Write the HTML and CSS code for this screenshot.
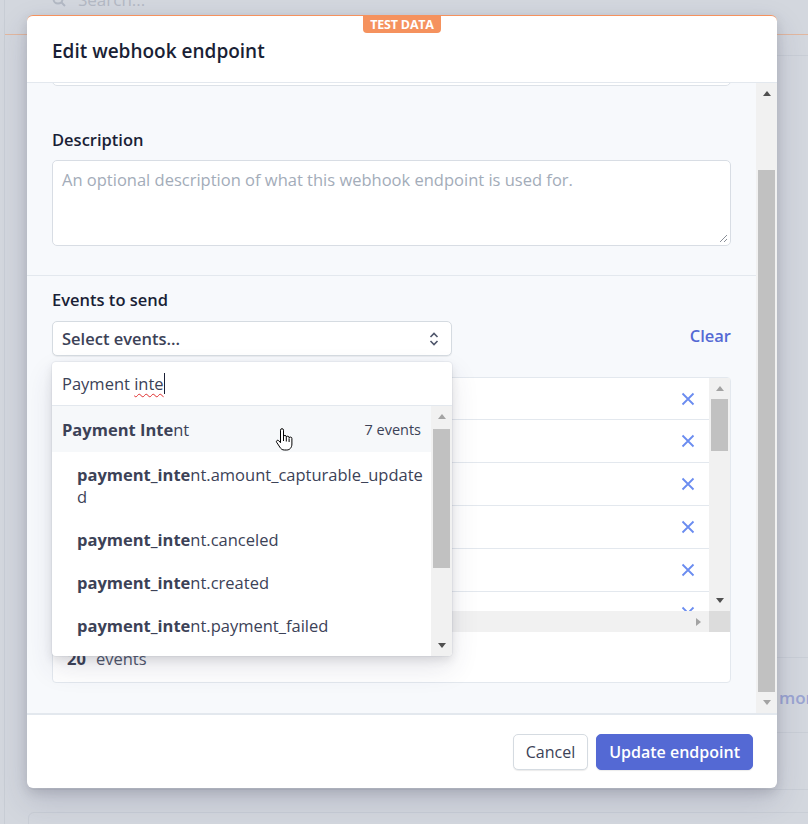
FILE: index.html
```html
<!DOCTYPE html>
<html lang="en">
<head>
    <meta charset="UTF-8">
    <title>Edit webhook endpoint</title>
    <link rel="stylesheet" href="styles.css">
</head>
<body>
    <div class="page">
        <div class="page-top">
            <div class="page-search">
                <svg width="14" height="14" viewBox="0 0 14 14"><circle cx="6" cy="6" r="4.5" fill="none" stroke="#b3b9c4" stroke-width="2"/><path d="M9.5 9.5L13 13" stroke="#b3b9c4" stroke-width="2"/></svg>
                <span>Search...</span>
            </div>
            <div class="page-tools">
                <svg width="14" height="12" viewBox="0 0 14 12"><path d="M1 4h3l6-3v10L4 8H1z" fill="#b3b9c4"/></svg>
            </div>
        </div>
        <div class="page-card">
            <div class="page-row tall"></div>
            <div class="page-row more-row"><span class="page-more">more</span></div>
            <div class="page-row last"></div>
        </div>
        <div class="page-card second"></div>
    </div>

    <div class="modal">
        <div class="modal-header">
            <span class="test-badge">TEST DATA</span>
            <h2>Edit webhook endpoint</h2>
        </div>

        <div class="modal-body">
            <div class="modal-scroll">
                <div class="section">
                    <div class="prev-input"></div>
                    <div class="field-label">Description</div>
                    <div class="textarea">
                        <span class="placeholder">An optional description of what this webhook endpoint is used for.</span>
                        <svg class="resize" width="9" height="9" viewBox="0 0 9 9"><path d="M8 1L1 8M8 5L5 8" stroke="#8a8f98" stroke-width="1"/></svg>
                    </div>
                </div>

                <div class="section events">
                    <div class="field-label">Events to send</div>
                    <div class="select-row">
                        <div class="select">
                            <span>Select events...</span>
                            <svg width="10" height="16" viewBox="0 0 10 16"><path d="M1.5 6L5 2.5 8.5 6M1.5 10L5 13.5 8.5 10" fill="none" stroke="#4f566b" stroke-width="1.6"/></svg>
                        </div>
                        <a class="clear" href="#">Clear</a>
                    </div>

                    <div class="selected">
                        <div class="selected-main">
                            <div class="selected-rows">
                                <div class="selected-row"><svg class="remove" width="14" height="14" viewBox="0 0 14 14"><path d="M1.5 1.5l11 11M12.5 1.5l-11 11"/></svg></div>
                                <div class="selected-row"><svg class="remove" width="14" height="14" viewBox="0 0 14 14"><path d="M1.5 1.5l11 11M12.5 1.5l-11 11"/></svg></div>
                                <div class="selected-row"><svg class="remove" width="14" height="14" viewBox="0 0 14 14"><path d="M1.5 1.5l11 11M12.5 1.5l-11 11"/></svg></div>
                                <div class="selected-row"><svg class="remove" width="14" height="14" viewBox="0 0 14 14"><path d="M1.5 1.5l11 11M12.5 1.5l-11 11"/></svg></div>
                                <div class="selected-row"><svg class="remove" width="14" height="14" viewBox="0 0 14 14"><path d="M1.5 1.5l11 11M12.5 1.5l-11 11"/></svg></div>
                                <div class="selected-row"><svg class="remove" width="14" height="14" viewBox="0 0 14 14"><path d="M1.5 1.5l11 11M12.5 1.5l-11 11"/></svg></div>
                            </div>
                            <div class="sb">
                                <div class="sb-btn"><i class="arrow-up dim"></i></div>
                                <div class="sb-track"><div class="sb-thumb thumb-list"></div></div>
                                <div class="sb-btn"><i class="arrow-down"></i></div>
                            </div>
                        </div>
                        <div class="hscroll">
                            <div class="hscroll-track"><i class="arrow-right dim"></i></div>
                            <div class="sb-corner"></div>
                        </div>
                        <div class="selected-count"><b>20</b> events</div>
                    </div>

                    <div class="dropdown">
                        <div class="dropdown-search">Payment <span class="typo">inte</span><span class="caret"></span></div>
                        <div class="dropdown-body">
                            <div class="dropdown-list">
                                <div class="group-row">
                                    <span><b>Payment Inte</b>nt</span>
                                    <span class="group-count">7 events</span>
                                </div>
                                <div class="event-row"><b>payment_inte</b>nt.amount_capturable_updated</div>
                                <div class="event-row"><b>payment_inte</b>nt.canceled</div>
                                <div class="event-row"><b>payment_inte</b>nt.created</div>
                                <div class="event-row"><b>payment_inte</b>nt.payment_failed</div>
                            </div>
                            <div class="sb">
                                <div class="sb-btn"><i class="arrow-up dim"></i></div>
                                <div class="sb-track"><div class="sb-thumb thumb-drop"></div></div>
                                <div class="sb-btn"><i class="arrow-down"></i></div>
                            </div>
                        </div>
                        <svg class="cursor" width="18" height="24" viewBox="0 0 18 24"><path d="M5.5 2.2a1.5 1.5 0 0 1 3 0v6.6a1.4 1.4 0 0 1 2.8 0v.8a1.4 1.4 0 0 1 2.8 0v.8a1.4 1.4 0 0 1 2.8 .2V16c0 3.4-2 6-5.2 6H9.4c-2.3 0-3.4-1.1-4.6-2.9L1.6 14.2a1.3 1.3 0 0 1 2-1.6l1.9 2.1z" fill="#fff" stroke="#000" stroke-width="1"/><path d="M8.5 9v4M11.3 10v3.5M14.1 11v3" stroke="#000" stroke-width="1"/></svg>
                    </div>
                </div>
            </div>
            <div class="sb body-sb">
                <div class="sb-btn"><i class="arrow-up"></i></div>
                <div class="sb-track"><div class="sb-thumb thumb-body"></div></div>
                <div class="sb-btn"><i class="arrow-down dim"></i></div>
            </div>
        </div>

        <div class="modal-footer">
            <button class="btn">Cancel</button>
            <button class="btn primary">Update endpoint</button>
        </div>
    </div>
</body>
</html>
```

FILE: styles.css
```css
* {
    box-sizing: border-box;
}
body {
    margin: 0;
    width: 808px;
    height: 824px;
    overflow: hidden;
    position: relative;
    background-color: #d3d7de;
    font-family: 'Open Sans', 'Noto Sans', sans-serif;
    font-size: 16.5px;
    color: #3c4257;
}

/* page behind the overlay */
.page {
    height: 100%;
    border-left: 1px solid #c8cdd5;
    margin-left: 4px;
    overflow: hidden;
}
.page-top {
    height: 35px;
    border-bottom: 1px solid #e2b79f;
    display: flex;
    justify-content: space-between;
    align-items: flex-start;
    padding: 0 0 0 47px;
}
.page-search, .page-tools {
    display: flex;
    align-items: center;
    gap: 12px;
    margin-top: -11px;
    font-size: 17px;
    color: #b3b9c4;
    line-height: 22px;
}
.page-tools {
    margin-right: 10px;
}
.page-card {
    margin: 20px -40px 0 23px;
    border: 1px solid #c9ced6;
    border-radius: 6px;
}
.page-row {
    height: 75px;
    border-bottom: 1px solid #c9ced6;
}
.page-row.tall {
    height: 602px;
}
.page-row.last {
    height: 56px;
    border-bottom: none;
}
.more-row {
    display: flex;
    align-items: center;
    padding-left: 750px;
    padding-top: 4px;
}
.page-more {
    color: #9aa4d2;
    font-size: 17px;
    font-weight: 600;
}
.page-card.second {
    margin-top: 22px;
    height: 60px;
}

/* modal */
.modal {
    position: absolute;
    left: 27px;
    top: 15px;
    width: 750px;
    height: 773px;
    background: white;
    border-top: 1px solid #f5925e;
    border-radius: 6px;
    box-shadow: 0 12px 30px rgba(50, 50, 93, 0.18), 0 4px 12px rgba(0, 0, 0, 0.12);
    display: flex;
    flex-direction: column;
    overflow: hidden;
}
.modal-header {
    height: 67px;
    border-bottom: 1px solid #e3e8ee;
    display: flex;
    flex-direction: column;
    padding: 0 25px;
}
.test-badge {
    align-self: center;
    height: 17px;
    padding: 0 7px;
    background-color: #f5925e;
    color: white;
    font-size: 12.5px;
    font-weight: 700;
    line-height: 17px;
    border-radius: 0 0 4px 4px;
    letter-spacing: -0.2px;
}
.modal-header h2 {
    margin: 6px 0 0;
    font-size: 19px;
    font-weight: 600;
    line-height: 24px;
    color: #1a1f36;
}

.modal-body {
    height: 630px;
    display: flex;
    background-color: #f7f9fc;
}
.modal-scroll {
    flex: 1;
    overflow: hidden;
}
.section {
    padding: 0 25px 29px;
}
.prev-input {
    height: 36px;
    margin-top: -33px;
    background: white;
    border: 1px solid #dde2e8;
    border-radius: 5px;
}
.field-label {
    margin-top: 44px;
    font-weight: 600;
    line-height: 20px;
    color: #1a1f36;
}
.textarea {
    position: relative;
    margin-top: 10px;
    height: 86px;
    background: white;
    border: 1px solid #d8dde4;
    border-radius: 5px;
    padding: 7px 9px;
    line-height: 24px;
}
.placeholder {
    color: #a3acb9;
}
.resize {
    position: absolute;
    right: 2px;
    bottom: 2px;
}

.events {
    position: relative;
    border-top: 1px solid #e3e8ee;
    padding: 14px 25px 0;
}
.events .field-label {
    margin-top: 0;
}
.select-row {
    margin-top: 11px;
    display: flex;
    align-items: center;
    justify-content: space-between;
}
.select {
    width: 400px;
    height: 35px;
    background: white;
    border: 1px solid #d5dbe1;
    border-radius: 5px;
    box-shadow: 0 1px 1px rgba(0, 0, 0, 0.06);
    display: flex;
    align-items: center;
    justify-content: space-between;
    padding: 0 12px 0 9px;
    font-weight: 600;
    color: #3c4257;
}
.clear {
    margin-bottom: 7px;
    color: #5469d4;
    font-weight: 600;
    text-decoration: none;
}

.selected {
    margin-top: 21px;
    height: 306px;
    background: white;
    border: 1px solid #e3e8ee;
    border-radius: 4px;
    display: flex;
    flex-direction: column;
}
.selected-main {
    height: 233px;
    display: flex;
}
.selected-rows {
    flex: 1;
    overflow: hidden;
}
.selected-row {
    height: 43px;
    border-bottom: 1px solid #e3e8ee;
    display: flex;
    align-items: center;
    justify-content: flex-end;
    padding-right: 14px;
}
.selected-row:first-child {
    height: 42px;
}
.remove {
    stroke: #6a8cf0;
    stroke-width: 1.8;
}
.hscroll {
    height: 21px;
    display: flex;
}
.hscroll-track {
    flex: 1;
    background: #f1f1f1;
    display: flex;
    align-items: center;
    justify-content: flex-end;
    padding-right: 8px;
}
.sb-corner {
    width: 21px;
    background: #dcdcdc;
}
.selected-count {
    flex: 1;
    display: flex;
    align-items: center;
    gap: 10px;
    padding: 2px 0 0 14px;
    color: #4f566b;
}
.selected-count b {
    color: #3c4257;
}

/* scrollbars */
.sb {
    width: 21px;
    background: #f1f1f1;
    display: flex;
    flex-direction: column;
}
.sb-btn {
    height: 21px;
    display: flex;
    align-items: center;
    justify-content: center;
}
.sb-track {
    flex: 1;
    padding: 0 2px;
}
.sb-thumb {
    background: #c1c1c1;
}
.thumb-body {
    margin-top: 66px;
    height: 522px;
}
.thumb-list {
    height: 52px;
}
.thumb-drop {
    margin-top: 2px;
    height: 139px;
}
.arrow-up, .arrow-down, .arrow-right {
    width: 0;
    height: 0;
    border: 4.5px solid transparent;
}
.arrow-up {
    border-bottom: 5px solid #505050;
    border-top-width: 0;
}
.arrow-down {
    border-top: 5px solid #505050;
    border-bottom-width: 0;
}
.arrow-right {
    border-left: 5px solid #a3a3a3;
    border-right-width: 0;
}
.arrow-up.dim {
    border-bottom-color: #a3a3a3;
}
.arrow-down.dim {
    border-top-color: #a3a3a3;
}

/* dropdown */
.dropdown {
    position: absolute;
    left: 25px;
    top: 86px;
    width: 400px;
    height: 294px;
    background: white;
    border-radius: 4px;
    box-shadow: 0 0 0 1px rgba(136, 152, 170, 0.1), 0 12px 28px rgba(50, 50, 93, 0.12), 0 4px 10px rgba(0, 0, 0, 0.1);
    display: flex;
    flex-direction: column;
    overflow: hidden;
}
.dropdown-search {
    height: 44px;
    border-bottom: 1px solid #e3e8ee;
    padding: 0 10px;
    display: flex;
    align-items: center;
    color: #3c4257;
    white-space: pre;
}
.typo {
    text-decoration: underline wavy #e03030;
    text-decoration-thickness: 1px;
    text-underline-offset: 3px;
    text-decoration-skip-ink: none;
}
.caret {
    width: 1px;
    height: 21px;
    background: #1a1f36;
}
.dropdown-body {
    flex: 1;
    display: flex;
}
.dropdown-list {
    flex: 1;
    overflow: hidden;
}
.group-row {
    height: 46px;
    background: #f6f8fa;
    display: flex;
    align-items: center;
    justify-content: space-between;
    padding: 0 10px;
    color: #3c4257;
}
.group-count {
    font-size: 14.5px;
}
.event-row {
    padding: 12px 4px 9px 25px;
    line-height: 22px;
    color: #3c4257;
    word-break: break-all;
}
.cursor {
    position: absolute;
    left: 223px;
    top: 66px;
}

/* footer */
.modal-footer {
    height: 75px;
    border-top: 2px solid #e3e8ee;
    display: flex;
    justify-content: flex-end;
    gap: 8px;
    padding: 19px 24px 0;
}
.btn {
    height: 36px;
    padding: 0 12px;
    border: 1px solid #d5dbe1;
    border-radius: 5px;
    background: white;
    box-shadow: 0 1px 1px rgba(0, 0, 0, 0.08);
    font-family: inherit;
    font-size: 16px;
    color: #3c4257;
}
.btn.primary {
    background-color: #5469d4;
    border-color: #5469d4;
    color: white;
    font-weight: 600;
}
```
